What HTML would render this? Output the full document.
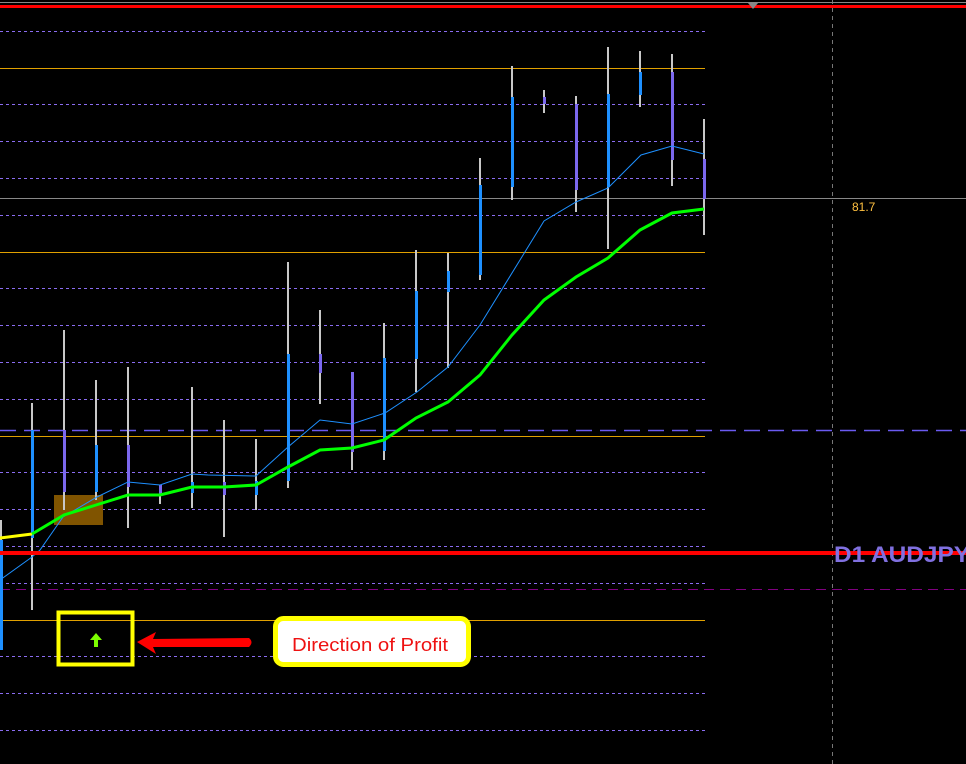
<!DOCTYPE html>
<html><head><meta charset="utf-8"><style>
html,body{margin:0;padding:0;background:#000;}
svg{display:block;}
</style></head><body>
<svg width="966" height="764" viewBox="0 0 966 764" xmlns="http://www.w3.org/2000/svg">
<rect width="966" height="764" fill="#000"/>
<g stroke="#8a6cf0" stroke-width="1" stroke-dasharray="3,3">
<line x1="0" y1="31.5" x2="705" y2="31.5"/>
<line x1="0" y1="104.5" x2="705" y2="104.5"/>
<line x1="0" y1="141.5" x2="705" y2="141.5"/>
<line x1="0" y1="178.5" x2="705" y2="178.5"/>
<line x1="0" y1="215.5" x2="705" y2="215.5"/>
<line x1="0" y1="288.5" x2="705" y2="288.5"/>
<line x1="0" y1="325.5" x2="705" y2="325.5"/>
<line x1="0" y1="362.5" x2="705" y2="362.5"/>
<line x1="0" y1="399.5" x2="705" y2="399.5"/>
<line x1="0" y1="472.5" x2="705" y2="472.5"/>
<line x1="0" y1="509.5" x2="705" y2="509.5"/>
<line x1="0" y1="546.5" x2="705" y2="546.5"/>
<line x1="0" y1="583.5" x2="705" y2="583.5"/>
<line x1="0" y1="656.5" x2="705" y2="656.5"/>
<line x1="0" y1="693.5" x2="705" y2="693.5"/>
<line x1="0" y1="730.5" x2="705" y2="730.5"/>
</g>
<g stroke="#e0a000" stroke-width="1">
<line x1="0" y1="68.5" x2="705" y2="68.5"/>
<line x1="0" y1="252.5" x2="705" y2="252.5"/>
<line x1="0" y1="436.5" x2="705" y2="436.5"/>
<line x1="0" y1="620.5" x2="705" y2="620.5"/>
</g>
<line x1="832.5" y1="0" x2="832.5" y2="764" stroke="#777" stroke-dasharray="4,4"/>
<line x1="0" y1="2.5" x2="966" y2="2.5" stroke="#888"/>
<rect x="0" y="5" width="966" height="3" fill="#ff0000"/>
<polygon points="748,3 758,3 753,9" fill="#888"/>
<line x1="0" y1="198.5" x2="966" y2="198.5" stroke="#888"/>
<text x="852" y="211" font-family="Liberation Sans, sans-serif" font-size="12" fill="#ffc040">81.7</text>
<line x1="0" y1="430.5" x2="966" y2="430.5" stroke="#6a5af0" stroke-width="1.5" stroke-dasharray="16,8"/>
<line x1="0" y1="589.5" x2="966" y2="589.5" stroke="#800080" stroke-dasharray="10,6"/>
<rect x="54" y="495" width="49" height="30" fill="#805400"/>
<g stroke="#c8c8c8" stroke-width="2">
<line x1="1" y1="520" x2="1" y2="650"/>
<line x1="32" y1="403" x2="32" y2="610"/>
<line x1="64" y1="330" x2="64" y2="510"/>
<line x1="96" y1="380" x2="96" y2="500"/>
<line x1="128" y1="367" x2="128" y2="528"/>
<line x1="160" y1="485" x2="160" y2="504"/>
<line x1="192" y1="387" x2="192" y2="508"/>
<line x1="224" y1="420" x2="224" y2="537"/>
<line x1="256" y1="439" x2="256" y2="510"/>
<line x1="288" y1="262" x2="288" y2="488"/>
<line x1="320" y1="310" x2="320" y2="404"/>
<line x1="352" y1="372" x2="352" y2="470"/>
<line x1="384" y1="323" x2="384" y2="460"/>
<line x1="416" y1="250" x2="416" y2="392"/>
<line x1="448" y1="253" x2="448" y2="368"/>
<line x1="480" y1="158" x2="480" y2="280"/>
<line x1="512" y1="66" x2="512" y2="200"/>
<line x1="544" y1="90" x2="544" y2="113"/>
<line x1="576" y1="96" x2="576" y2="212"/>
<line x1="608" y1="47" x2="608" y2="249"/>
<line x1="640" y1="51" x2="640" y2="107"/>
<line x1="672" y1="54" x2="672" y2="186"/>
<line x1="704" y1="119" x2="704" y2="235"/>
</g>
<g fill="#1e90ff">
<rect x="0" y="540" width="3" height="110"/>
<rect x="31" y="430" width="3" height="108"/>
<rect x="95" y="445" width="3" height="47"/>
<rect x="191" y="482" width="3" height="11"/>
<rect x="255" y="481" width="3" height="14"/>
<rect x="287" y="354" width="3" height="127"/>
<rect x="383" y="358" width="3" height="93"/>
<rect x="415" y="291" width="3" height="68"/>
<rect x="447" y="271" width="3" height="21"/>
<rect x="479" y="185" width="3" height="90"/>
<rect x="511" y="97" width="3" height="90"/>
<rect x="607" y="94" width="3" height="93"/>
<rect x="639" y="72" width="3" height="23"/>
</g>
<g fill="#7b68ee">
<rect x="63" y="430" width="3" height="62"/>
<rect x="127" y="445" width="3" height="42"/>
<rect x="159" y="485" width="3" height="9"/>
<rect x="223" y="482" width="3" height="13"/>
<rect x="319" y="354" width="3" height="19"/>
<rect x="351" y="372" width="3" height="80"/>
<rect x="543" y="97" width="3" height="7"/>
<rect x="575" y="104" width="3" height="86"/>
<rect x="671" y="72" width="3" height="88"/>
<rect x="703" y="159" width="3" height="40"/>
</g>
<polyline fill="none" stroke="#1e90ff" stroke-width="1" points="0,580 32,557 40,550 63,517 97,497 128,482 160,485 192,474 208,475 256,476 288,447 320,420 352,424 385,413 417,392 448,367 480,325 520,260 544,221 576,202 608,188 641,155 672,146 704,154"/>
<polyline fill="none" stroke="#ffff00" stroke-width="3" points="0,538 32,534"/>
<polyline fill="none" stroke="#00ff00" stroke-width="3" points="32,534 64,515 96,505 128,495 160,495 192,487 224,487 256,485 288,467 320,450 352,448 384,440 416,418 448,402 480,375 512,335 544,300 576,277 608,258 640,230 672,213 704,209"/>
<rect x="0" y="551" width="966" height="4" fill="#ff0000"/>
<text x="834" y="562" font-family="Liberation Sans, sans-serif" font-weight="bold" font-size="22" fill="#8070e0" textLength="136" lengthAdjust="spacingAndGlyphs">D1 AUDJPY</text>
<rect x="58.5" y="612.5" width="74" height="52" fill="none" stroke="#ffff00" stroke-width="4"/>
<path d="M96,633 L90,640 L94,640 L94,647 L98,647 L98,640 L102,640 Z" fill="#7cfc00"/>
<path d="M137,642 L156,632 L153,639 L249,638 Q254,642 249,647 L153,647 L156,654 Z" fill="#ff0000"/>
<rect x="275.5" y="618.5" width="193" height="46" rx="8" fill="#fff" stroke="#ffff00" stroke-width="5"/>
<text x="292" y="651" font-family="Liberation Sans, sans-serif" font-size="18" fill="#ee1111" textLength="156" lengthAdjust="spacingAndGlyphs">Direction of Profit</text>
</svg>
</body></html>
